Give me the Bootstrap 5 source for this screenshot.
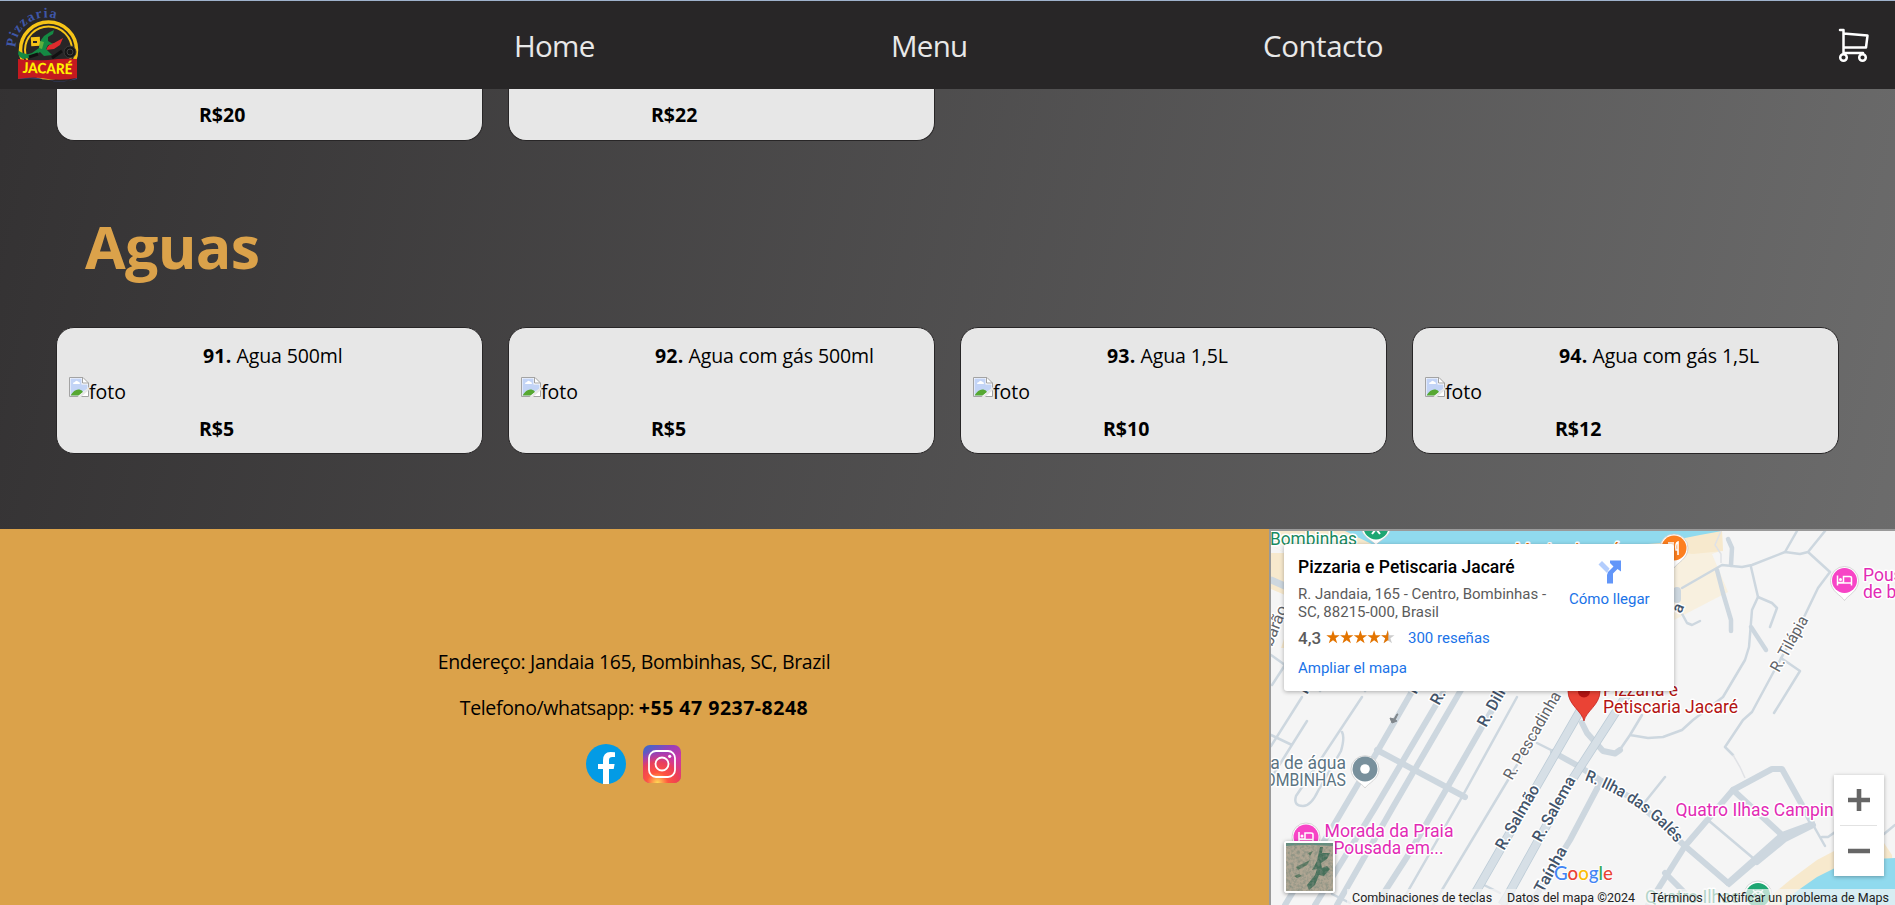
<!DOCTYPE html>
<html lang="es">
<head>
<meta charset="utf-8">
<meta name="viewport" content="width=device-width, initial-scale=1">
<title>Pizzaria Jacaré</title>
<link href="https://cdn.jsdelivr.net/npm/bootstrap@5.3.0/dist/css/bootstrap.min.css" rel="stylesheet">
<style>
body{font-family:"Open Sans","Noto Sans",sans-serif;font-size:19.5px;line-height:27px;color:#000;height:905px;overflow:hidden;background:linear-gradient(103deg,#333132 0%,#6e6e6e 100%)}
.topbar{height:89px;background:#282627;border-top:1px solid #9fb2cc;z-index:5}
.logo{width:80px;height:80px;margin-left:2px;overflow:visible}
.links{margin-left:432px;gap:298px;padding-top:2px}
.links a{color:#e8e8e8;font-size:29.5px;line-height:40px;white-space:nowrap;letter-spacing:-.7px;width:79px}
.links a:nth-child(2){width:74px}
.links a:last-child{width:119px;letter-spacing:-.45px}
.cart{margin-right:25px}
.catalog{height:440px;padding:0 56px}
.grid4{display:grid;grid-template-columns:repeat(4,427px);gap:25px}
.item{border:1px solid #282627;border-radius:18px;background:#e7e7e7;height:127px;padding:14px 12px 0}
.item.cut{height:52px;border-top:0;border-radius:0 0 18px 18px;padding-top:12px}
.item .title{padding-left:134px;letter-spacing:-.1px}
.item .title b{letter-spacing:.2px}
.item .price{padding-left:130px;font-weight:700;letter-spacing:0}
.item b,.foot b{font-weight:700}
.foot b{letter-spacing:.5px}
.pic{height:37px;margin-top:9px;letter-spacing:0}
.pic svg{margin-top:-1px}
h1.kind{font-size:59px;font-weight:700;color:#dba24a;line-height:80px;margin:65px 0 41px 29px;letter-spacing:-.7px}
.foot{height:376px;background:#dba24a}
.contact{width:1268px;padding-top:119px;letter-spacing:-.35px}
.contact p{margin:0 0 19px}
.social{gap:17px;padding-top:4px;margin-left:-1px}
.mapbox{width:626px;margin-left:1px;border-left:2px solid #9a9a9a;border-top:2px solid #9a9a9a;overflow:hidden;font-family:Roboto,sans-serif;background:#f5f5f5}
.mapbox>svg{display:block}
.place{left:13px;top:13px;width:390px;height:147px;background:#fff;border-radius:3px;box-shadow:0 1px 4px rgba(0,0,0,.3);padding:13px 14px;font-size:15px;line-height:18px;color:#5b5b5b}
.place .name{font-size:17.5px;font-weight:500;color:#000;line-height:20px}
.place a,.place .go{color:#1a73e8;text-decoration:none}
.zoomer{left:563px;top:244px;width:50px;height:101px;background:#fff;box-shadow:0 1px 4px rgba(0,0,0,.3)}
.thumb{left:13px;top:310px;width:51px;height:52px;border:2px solid #fff;border-radius:3px;box-shadow:0 1px 4px rgba(0,0,0,.4)}
.terms{right:0;bottom:0;height:16px;width:548px;background:rgba(245,245,245,.7);font-size:12.5px;line-height:17px;color:#222;white-space:nowrap;padding-left:5px}
.rd{fill:none;stroke:#cdd7df;stroke-linejoin:round;stroke-linecap:round}
.halo text{paint-order:stroke;stroke:#fff;stroke-width:3px;stroke-linejoin:round;font-family:Roboto,sans-serif}
</style>
</head>
<body>
<header class="topbar d-flex align-items-center position-relative">
  <svg class="logo" viewBox="2 5 80 80">
    <path id="arc" d="M15.500 47.500A31 31 0 0 1 61 21" fill="none"/>
    <circle cx="48.500" cy="50" r="28" fill="none" stroke="#f6c417" stroke-width="3.500"/>
    <circle cx="48.500" cy="50" r="23.500" fill="#282627" stroke="#f6c417" stroke-width="2"/>
    <rect x="31" y="37" width="9" height="9" fill="#f6c417" transform="rotate(-3 35 41)"/>
    <path d="M33 41h4v2h-4z" fill="#282627"/>
    <path d="M46 50q2-6 8-7l9-5-3 7-6 4z" fill="#df2b2d"/>
    <path d="M19 51q7 5 13 2l7-5 2-8 3-4 6-4 4-2-1 4-5 3v4l5 3-5 1-2 4 6 6-8 1-4-4-8 5-9 2q-7-3-4-9z" fill="#148a43"/>
    <path d="M40 41l4 1-2 7-3-1z" fill="#5fae3d"/>
    <path d="M29 57l9-3M52 58l10-7" stroke="#111" stroke-width="3"/>
    <circle cx="70" cy="52" r="6" fill="#161616" stroke="#3b3b3b"/>
    <circle cx="70" cy="52" r="3" fill="none" stroke="#444"/>
    <path d="M18 78q15-2 30 2t29-2v1q-15 4-29 1t-30-1z" fill="#3c55a8"/>
    <path d="M18 59q15 2 30 1 15-2 29-1v19q-14 3-29 1-15-3-30 0z" fill="#c4191f"/>
    <text font-family="Liberation Serif,serif" font-size="14" font-weight="700" fill="#3f57a8"><textPath href="#arc" textLength="57">Pizzaria</textPath></text>
    <text x="22.500" y="73.500" font-family="Lato,sans-serif" font-size="14.500" font-weight="900" fill="#fff200" textLength="50" lengthAdjust="spacingAndGlyphs" transform="rotate(1.500 48 70)">JACARÉ</text>
  </svg>
  <nav class="links d-flex"><a class="text-decoration-none" href="#">Home</a><a class="text-decoration-none" href="#">Menu</a><a class="text-decoration-none" href="#">Contacto</a></nav>
  <svg class="cart ms-auto" width="32" height="36" viewBox="0 0 32 36" fill="none" stroke="#fff" stroke-width="2.500" stroke-linejoin="round" stroke-linecap="round"><path d="M2 3h3.500V26M5.500 6.500 29.500 8.500 28 20.500H5.500M5.500 26H25"/><circle cx="5.500" cy="30.500" r="3.300"/><circle cx="24.500" cy="30.500" r="3.300"/></svg>
</header>

<svg class="d-none">
  <symbol id="broken" viewBox="0 0 20 20"><path d="M.5.500H14L19.500 6v13.500H.500z" fill="#fff" stroke="#a3a3a3"/><path d="M1.500 1.500h11v6h6v4L9 18.500H1.500z" fill="#c3d4f6"/><path d="M1.500 18.500q4-7 9-6 3 .5 3.500 2.500l-4.500 3.500z" fill="#56a832"/><path d="M4 7q0-2 2-2 1-2 3-.5 2 0 2 2.500z" fill="#fff"/><path d="M13.500.5V6h6" fill="none" stroke="#a3a3a3"/><path d="M20 10 8.500 20H12l8-7z" fill="#e7e7e7"/></symbol>
</svg>

<main class="catalog">
  <div class="grid4">
    <div class="item cut"><div class="price">R$20</div></div>
    <div class="item cut"><div class="price">R$22</div></div>
  </div>
  <h1 class="kind">Aguas</h1>
  <div class="grid4">
    <div class="item"><div class="title"><b>91.</b> Agua 500ml</div><div class="pic d-flex"><svg width="20" height="20"><use href="#broken"/></svg><span>foto</span></div><div class="price">R$5</div></div>
    <div class="item"><div class="title"><b>92.</b> Agua com gás 500ml</div><div class="pic d-flex"><svg width="20" height="20"><use href="#broken"/></svg><span>foto</span></div><div class="price">R$5</div></div>
    <div class="item"><div class="title"><b>93.</b> Agua 1,5L</div><div class="pic d-flex"><svg width="20" height="20"><use href="#broken"/></svg><span>foto</span></div><div class="price">R$10</div></div>
    <div class="item"><div class="title"><b>94.</b> Agua com gás 1,5L</div><div class="pic d-flex"><svg width="20" height="20"><use href="#broken"/></svg><span>foto</span></div><div class="price">R$12</div></div>
  </div>
</main>

<footer class="foot d-flex">
  <section class="contact text-center">
    <p>Endereço: Jandaia 165, Bombinhas, SC, Brazil</p>
    <p>Telefono/whatsapp: <b>+55 47 9237-8248</b></p>
    <div class="social d-flex justify-content-center align-items-center">
      <svg width="40" height="40" viewBox="0 0 40 40"><circle cx="20" cy="20" r="20" fill="#039be5"/><path d="M17 40V25h-5v-5h5v-3.500Q17 8 24.500 8q2.500 0 4.500.3V13h-2.700Q23 13 23 16v4h5.600l-.9 5H23v15z" fill="#fff"/></svg>
      <svg width="38" height="38" viewBox="0 0 38 38"><defs><linearGradient id="ig1" x1=".15" y1="0" x2=".75" y2="1"><stop offset="0" stop-color="#4168c9"/><stop offset=".3" stop-color="#9a3fb8"/><stop offset=".6" stop-color="#cc39a4"/><stop offset="1" stop-color="#e03c6c"/></linearGradient><radialGradient id="ig2" cx=".38" cy="1" r=".85"><stop offset="0" stop-color="#fd5"/><stop offset=".33" stop-color="#ff543f"/><stop offset=".65" stop-color="#f0404f" stop-opacity=".85"/><stop offset="1" stop-color="#c837ab" stop-opacity="0"/></radialGradient></defs><rect width="38" height="38" rx="7" fill="url(#ig1)"/><rect width="38" height="38" rx="7" fill="url(#ig2)"/><g fill="none" stroke="#fff" stroke-width="1.800"><rect x="6" y="6" width="26" height="26" rx="7"/><circle cx="19" cy="19" r="6.500"/></g><circle cx="26.700" cy="11.300" r="1.600" fill="#fff"/></svg>
    </div>
  </section>

  <section class="mapbox position-relative">
    <svg width="624" height="374" viewBox="1271 531 624 374">
      <rect x="1271" y="531" width="624" height="374" fill="#f5f5f5"/>
      <path d="M1600 531H1722L1723 550 1712 554 1728 592 1674 620 1600 600z" fill="#f8f0df"/>
      <path d="M1271 531h451l1 20-30 3-50-5-372-4z" fill="#f7e9cd"/>
      <path d="M1345 531H1722L1700 535 1660 543 1600 548 1380 548z" fill="#90daee"/>
      <path d="M1271 545l14 8v42l-14-6z" fill="#f7e9cd"/>
      <path d="M1271 545l14 8-14 0z" fill="#f5f5f5"/>
      <path d="M1281 648l4-12v12z" fill="#f7e9cd"/>
      <path d="M1760 905 1790 880 1817 860 1836 850 1884 843 1892 855 1895 905z" fill="#f7e9cd"/>
      <path d="M1782 905 1797 891 1817 877 1837 867 1857 860 1895 858V905z" fill="#90daee"/>
      <path d="M1271 580l16 7" class="rd" stroke-width="7"/>
      <g class="rd" stroke-width="6">
        <path d="M1414 688 1377 752 1335 823 1285 905M1443 693 1375 808 1315 905M1461 690 1393 807 1337 905M1510 680 1482 727 1447 788 1407 857 1376 905"/>
        <path d="M1377 750 1465 797"/>
        <path d="M1553 752 1580 767 1600 780 1635 800 1685 846 1728 883"/>
        <path d="M1600 783 1570 840 1530 905"/>
        <path d="M1582 723 1587 733 1595 742 1603 751 1615 753.500 1620 750"/>
        <path d="M1648 905 1685 846 1733 790 1772 769H1782L1812 823"/>
        <path d="M1733 790 1782 835M1728 883 1782 835 1812 824"/>
        <path d="M1757 862 1785 839 1813 825M1665 873 1692 900"/>
      </g>
      <g class="rd" stroke-width="4.500">
        <path d="M1717 570 1723 593 1731 620V631M1728 539 1732 548 1731 565M1751 627 1766 650"/>
      </g>
      <g class="rd" stroke-width="2.500">
        <path d="M1682 588 1722 565 1742 567 1752 565 1785 552 1800 554 1808 552 1825 531M1785 552 1797 531M1808 552 1830 572 1818 588 1805 615 1773 673 1752 712 1743 720 1725 747 1733 755"/>
        <path d="M1751 567 1758 597 1752 610 1749 647 1745 660 1723 697 1693 720 1682 730 1663 737 1648 738 1630 735 1642 715M1630 735 1619 751"/>
        <path d="M1758 597 1772 603 1777 608 1770 627M1781 658 1800 671 1774 713M1680 610 1687 623 1692 625 1700 621"/>
        <path d="M1302 697 1271 746M1362 697 1317 765 1296 796Q1293 806 1303 806 1311 806 1318 791L1341 751Q1345 737 1342 732M1307 721 1273 775M1271 735 1292 745"/>
        <path d="M1320 691 1330 677M1365 691 1370 684M1517 697 1462 797 1400 905M1555 700 1508 780 1433 905M1537 743 1555 752"/>
        <path d="M1665 777 1645 802M1708 820 1753 858M1812 823 1825 846M1822 837H1828L1838 830M1884 834 1895 825M1729 886 1757 862M1332 894 1350 903M1484 885 1500 893M1271 655 1285 665 1272 685"/>
      </g>
      <path d="M1721 531 1715 545 1721 554V563M1733 755 1740 767 1745 778" fill="none" stroke="#e0e2e6" stroke-width="1.500"/>
      <rect x="1673" y="587" width="8" height="16" rx="4" fill="#cdd7df"/>
      <g fill="none"><path d="M1592 690 1477 890 1467 905M1630 690 1570 783 1507 897 1502 905" stroke="#bccbd6" stroke-width="9"/><path d="M1592 690 1477 890 1467 905M1630 690 1570 783 1507 897 1502 905" stroke="#d6dfe6" stroke-width="7.500"/></g>
      <path d="M1397 714l-3 5-4-1 2 5 5-2-2-1 3-6z" fill="#80868b" stroke="#80868b"/>
      <g class="halo" font-size="17.500">
        <text x="1270" y="545" fill="#188a5f" textLength="87" lengthAdjust="spacingAndGlyphs">Bombinhas</text>
        <text x="1515" y="556" fill="#e8710a" textLength="105">Mestre Jacaré</text>
        <text x="1603" y="696" fill="#b31412" textLength="75" lengthAdjust="spacingAndGlyphs">Pizzaria e</text>
        <text x="1603" y="713" fill="#b31412" textLength="135" lengthAdjust="spacingAndGlyphs">Petiscaria Jacaré</text>
        <g fill="#e22bb5"><text x="1863" y="581">Pousada</text><text x="1863" y="598">de bombas</text><text x="1324.500" y="837" textLength="129" lengthAdjust="spacingAndGlyphs">Morada da Praia</text><text x="1333.500" y="854" textLength="110" lengthAdjust="spacingAndGlyphs">Pousada em...</text><text x="1675.500" y="816" textLength="168" lengthAdjust="spacingAndGlyphs">Quatro Ilhas Camping</text></g>
        <g fill="#5b7482"><text x="1346" y="769" text-anchor="end">Caixa de água</text><text x="1346" y="786" text-anchor="end" textLength="91" lengthAdjust="spacingAndGlyphs">BOMBINHAS</text></g>
        <text x="1645" y="903" fill="#188a5f" textLength="95" lengthAdjust="spacingAndGlyphs">Quatro Ilhas</text>
        <g font-size="16" fill="#5f6368">
          <text transform="translate(1779 673) rotate(-61)" textLength="61" lengthAdjust="spacingAndGlyphs">R. Tilápia</text>
          <text transform="translate(1512 781) rotate(-60)" textLength="99" lengthAdjust="spacingAndGlyphs">R. Pescadinha</text>
          <text transform="translate(1272 647) rotate(-68)" textLength="42" lengthAdjust="spacingAndGlyphs">barão</text>
        </g>
        <g font-size="16" font-weight="500" fill="#43546a">
          <text transform="translate(1504 851) rotate(-60)" textLength="72" lengthAdjust="spacingAndGlyphs">R. Salmão</text>
          <text transform="translate(1541 843) rotate(-61)" textLength="72" lengthAdjust="spacingAndGlyphs">R. Salema</text>
          <text transform="translate(1543 894) rotate(-61)" textLength="50" lengthAdjust="spacingAndGlyphs">Taínha</text>
          <text transform="translate(1486 728) rotate(-61)">R. Dilmar</text>
          <text transform="translate(1439 706) rotate(-61)">R. Jandaia</text>
          <text transform="translate(1416 695) rotate(-61)">R. P</text>
          <text transform="translate(1307 695) rotate(-61)">P</text>
          <text transform="translate(1681 614) rotate(-66)">a</text>
          <path id="gal" d="M1584 780Q1645 803 1680 848" fill="none"/>
          <text><textPath href="#gal" textLength="113" lengthAdjust="spacingAndGlyphs">R. Ilha das Galés</textPath></text>
        </g>
      </g>
      <defs><g id="drop"><path d="M0 20C-3 15-14 11-14 0A14 14 0 0 1 14 0C14 11 3 15 0 20z" fill="#fff" stroke="#c5c5c5" stroke-width=".7"/></g><g id="bed" fill="none" stroke="#fff" stroke-width="1.500"><path d="M-7-5V5M-7 2.500H7.500M7 5V-2.500Q7-4 5-4H-1V2M-7 2H-1"/><circle cx="-4" cy="-1" r="1.500" fill="#fff" stroke="none"/></g></defs>
      <g transform="translate(1376 527)"><use href="#drop" transform="scale(1.05 .9)"/><circle r="12.500" fill="#1ea672"/><path d="M-4 7 0 2 4 7" stroke="#fff" stroke-width="2" fill="none"/></g>
      <g transform="translate(1674 548)"><use href="#drop"/><circle r="12.500" fill="#fd7f1f"/><path d="M-5-6v5q0 2 2 2v6M-3-6v6M-1-6v5q0 2-2 2M4 7V-6Q1-5 2 2h2" fill="none" stroke="#fff" stroke-width="1.600"/></g>
      <g transform="translate(1844.500 580.500)"><use href="#drop"/><circle r="12.500" fill="#f744c6"/><use href="#bed"/></g>
      <g transform="translate(1306 837)"><use href="#drop"/><circle r="12.500" fill="#f744c6"/><use href="#bed"/></g>
      <g transform="translate(1365 769)"><use href="#drop" transform="scale(1 .95)"/><circle r="12.500" fill="#78909c"/><circle r="4.800" fill="#fff"/></g>
      <g transform="translate(1758 895)"><use href="#drop"/><circle r="12" fill="#1ea672"/><path d="M-5-5 5 5M5-5-5 5M-6 0Q0-8 6 0" fill="none" stroke="#fff" stroke-width="1.500"/></g>
      <path d="M1584 721C1582 711 1568 705 1568 691A16 16 0 0 1 1600 691C1600 705 1586 711 1584 721z" fill="#ea4335" stroke="#c5221f" stroke-width=".8"/><circle cx="1584" cy="691.500" r="6" fill="#b31412"/>
      <text x="1554" y="879.500" font-family="Lato,sans-serif" font-size="19.500" font-weight="500" stroke="#fff" stroke-width="1.500" paint-order="stroke" textLength="59" lengthAdjust="spacingAndGlyphs"><tspan fill="#4285f4">G</tspan><tspan fill="#ea4335">o</tspan><tspan fill="#fbbc04">o</tspan><tspan fill="#4285f4">g</tspan><tspan fill="#34a853">l</tspan><tspan fill="#ea4335">e</tspan></text>
    </svg>

    <div class="place position-absolute d-flex justify-content-between">
      <div>
        <div class="name">Pizzaria e Petiscaria Jacaré</div>
        <div style="margin-top:8px">R. Jandaia, 165 - Centro, Bombinhas -<br>SC, 88215-000, Brasil</div>
        <div class="d-flex align-items-center" style="margin-top:8px"><span style="font-weight:500;font-size:17px;width:28px">4,3</span>
          <svg width="69" height="14" viewBox="0 0 69 14" style="margin-top:-2px"><defs><path id="st" d="M7 .3 8.600 5.200H13.700L9.600 8.300 11.200 13.200 7 10.200 2.800 13.200 4.400 8.300.3 5.200H5.400z"/><clipPath id="half"><path d="M0 0h7.500v14H0z"/></clipPath></defs><g fill="#e37400"><use href="#st"/><use href="#st" x="13.700"/><use href="#st" x="27.400"/><use href="#st" x="41.100"/></g><use href="#st" x="54.800" fill="#ccc"/><g transform="translate(54.800)"><use href="#st" fill="#e37400" clip-path="url(#half)"/></g></svg>
          <a href="#" style="margin-left:13px">300 reseñas</a></div>
        <div style="margin-top:12px"><a href="#">Ampliar el mapa</a></div>
      </div>
      <div class="go text-center" style="width:80px;margin:3px 11px 0 0">
        <svg class="d-block mx-auto" width="23" height="24" viewBox="0 0 23 24"><path d="M.5 4.500 4 1 11.500 8.500 9 13z" fill="#b3cdfd"/><path d="M9 23.500V15q0-3 3-5l3.500-3.500L12 3V.5h11v11L19.500 9 15 13.500V23.500z" fill="#6296f9"/></svg>
        <div style="margin-top:6px;white-space:nowrap">Cómo llegar</div>
      </div>
    </div>

    <div class="thumb position-absolute"><svg class="d-block" width="47" height="48" viewBox="0 0 47 48"><defs><filter id="grain" x="0" y="0" width="1" height="1"><feTurbulence type="fractalNoise" baseFrequency=".35" numOctaves="3" seed="4"/><feColorMatrix values="0 0 0 0 .2  0 0 0 0 .25  0 0 0 0 .2  1.600 0 0 0 -.6"/></filter></defs><rect width="47" height="48" fill="#b0a693"/><path d="M0 0h47v3Q20 1 0 3z" fill="#5f8f80"/><path d="M34 4l3 0-1 6 8 0-3 6-6 4 1 5 5-2 3 3-6 7-5-1-4 10-6 5-2-5 8-10 2-6-5 1 5-9z" fill="#46705a"/><path d="M10 24l8-4 6-3-3 5-9 5zM22 10l5-2-3 5zM8 33l5-2 3 2-5 2z" fill="#54755c"/><rect width="47" height="48" filter="url(#grain)"/></svg></div>

    <div class="zoomer position-absolute"><svg class="d-block" width="50" height="101"><path d="M14 25H36M25 14V36M14 76H36" stroke="#666" stroke-width="4.600"/><path d="M6 50.500H43" stroke="#e2e2e2"/></svg></div>

    <div class="terms position-absolute d-flex"><span style="width:155px">Combinaciones de teclas</span><span style="width:143.500px">Datos del mapa ©2024</span><span style="width:67px">Términos</span><span>Notificar un problema de Maps</span></div>
  </section>
</footer>
<script src="https://cdn.jsdelivr.net/npm/bootstrap@5.3.0/dist/js/bootstrap.bundle.min.js"></script>
</body>
</html>
